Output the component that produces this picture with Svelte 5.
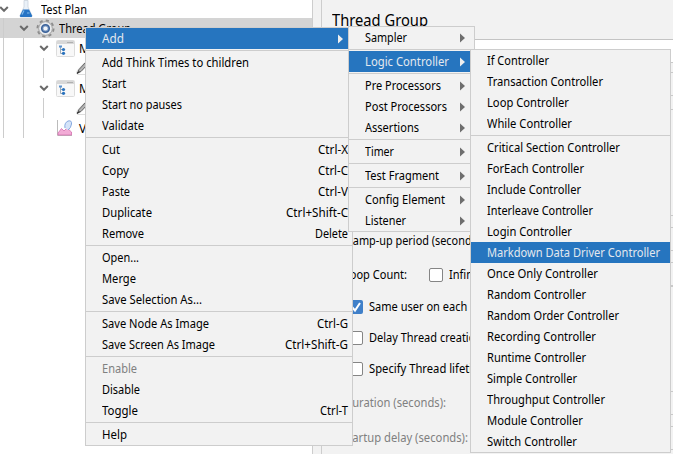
<script>
  const main = [
    [['Add', 22, '', 0, 'sub on']],
    [['Add Think Times to children', 147], ['Start', 24], ['Start no pauses', 80], ['Validate', 42]],
    [['Cut', 18, 'Ctrl-X', 30], ['Copy', 27, 'Ctrl-C', 30], ['Paste', 28, 'Ctrl-V', 30], ['Duplicate', 50, 'Ctrl+Shift-C', 62], ['Remove', 42, 'Delete', 33]],
    [['Open...', 37], ['Merge', 34], ['Save Selection As...', 100]],
    [['Save Node As Image', 107, 'Ctrl-G', 31], ['Save Screen As Image', 113, 'Ctrl+Shift-G', 63]],
    [['Enable', 35, '', 0, 'off'], ['Disable', 38], ['Toggle', 36, 'Ctrl-T', 28]],
    [['Help', 25]]
  ];
  const kinds = [
    [['Sampler', 42, '', 0, 'sub']],
    [['Logic Controller', 84, '', 0, 'sub on']],
    [['Pre Processors', 76, '', 0, 'sub'], ['Post Processors', 82, '', 0, 'sub'], ['Assertions', 54, '', 0, 'sub']],
    [['Timer', 29, '', 0, 'sub']],
    [['Test Fragment', 74, '', 0, 'sub']],
    [['Config Element', 80, '', 0, 'sub'], ['Listener', 41, '', 0, 'sub']]
  ];
  const controllers = [
    [['If Controller', 62], ['Transaction Controller', 116], ['Loop Controller', 82], ['While Controller', 85]],
    [
      ['Critical Section Controller', 133], ['ForEach Controller', 97], ['Include Controller', 94],
      ['Interleave Controller', 106], ['Login Controller', 85], ['Markdown Data Driver Controller', 173, '', 0, 'on'],
      ['Once Only Controller', 111], ['Random Controller', 99], ['Random Order Controller', 132],
      ['Recording Controller', 109], ['Runtime Controller', 99], ['Simple Controller', 90],
      ['Throughput Controller', 118], ['Module Controller', 96], ['Switch Controller', 90]
    ]
  ];

  // Condenses a label to the given width.
  function fit(node, width) {
    const natural = node.getBoundingClientRect().width;
    node.style.width = width + 'px';
    node.style.transform = `scaleX(${width / natural})`;
  }
</script>

{#snippet label(text, width)}<span class="label" use:fit={width}>{text}</span>{/snippet}

{#snippet menu(groups, name)}
  <div class="menu {name}">
    {#each groups as group}
      <div class="group">
        {#each group as [text, width, keys, keysWidth, state]}
          <div class="item {state ?? ''}">
            {@render label(text, width)}
            {#if keys}{@render label(keys, keysWidth)}{/if}
            {#if state?.includes('sub')}
              <svg class="arrow" width="5" height="10" viewBox="0 0 5 10"><path d="M0 0.5L5 5L0 9.5Z" /></svg>
            {/if}
          </div>
        {/each}
      </div>
    {/each}
  </div>
{/snippet}

{#snippet chevron()}
  <svg class="chev" width="10" height="8" viewBox="0 0 10 8"><path d="M1.2 2L5 5.8L8.8 2" fill="none" stroke="#6a6a6a" stroke-width="2" /></svg>
{/snippet}

{#snippet folder()}
  <svg class="folder" width="19" height="17" viewBox="0 0 19 17">
    <rect x=".5" y=".5" width="18" height="16" rx="1" fill="#f8f8f8" stroke="#dcdcdc" />
    <path d="M1 1h17v3H1z" fill="#d8d8d8" /><path d="M11 2.5h6" stroke="#b0b0b0" />
    <path d="M4.500 6v7.500H7M4.500 9.500H7" stroke="#9cabb8" fill="none" />
    <path d="M3 5.500h3v2H3z" fill="#5b93cf" /><circle cx="7.500" cy="9.500" r="1.600" fill="#2871bd" /><circle cx="7.500" cy="13.300" r="1.600" fill="#2871bd" />
  </svg>
{/snippet}

{#snippet pencil()}
  <svg width="14" height="16" viewBox="0 0 14 16">
    <path d="M1 14V11L8 3h6v11.500H2z" fill="#fff" stroke="#ddd" />
    <path d="M1.500 13L3 9.500L10 2L12 4L5 11.500Z" fill="#b5b5b5" stroke="#606060" />
    <path d="M1 13.500L3.500 11.500" stroke="#333" stroke-width="1.300" />
  </svg>
{/snippet}

<div class="window">
  <div class="tree">
    <div class="node plan">
      {@render chevron()}
      <svg class="flask" width="14" height="18" viewBox="0 0 14 18">
        <path d="M5 .5h4v6.500l4 8.500q.5 1.500-1 1.500H2q-1.500 0-1-1.500L5 7z" fill="#eaf1f8" stroke="#c9d2dc" stroke-width=".8" />
        <path d="M4 9.500h6l3 6q.5 1.500-1 1.500H2q-1.500 0-1-1.500z" fill="#2674c5" />
        <path d="M5 10.500L3 14.500M8 13h2.500" stroke="#83bbe9" stroke-width="1.200" />
      </svg>
      {@render label('Test Plan', 46)}
    </div>
    <div class="node thread">
      {@render chevron()}
      <svg class="gear" width="19" height="19" viewBox="0 0 20 20">
        <circle cx="10" cy="10" r="8.500" fill="none" stroke="#8d8d8d" stroke-width="2" stroke-dasharray="3.340 3.336" />
        <circle cx="10" cy="10" r="7.200" fill="#e8eaec" stroke="#999" stroke-width=".9" />
        <circle cx="10" cy="10" r="4" fill="#7e9cc4" stroke="#3b629a" stroke-width="1.600" />
        <circle cx="10" cy="10" r="2.200" fill="#f2f5f9" />
      </svg>
      {@render label('Thread Group', 72)}
    </div>
    <div class="node module">{@render chevron()}{@render folder()}<span class="name">Module</span></div>
    <div class="node leaf">{@render pencil()}</div>
    <div class="node module">{@render chevron()}{@render folder()}<span class="name">Module</span></div>
    <div class="node leaf">{@render pencil()}</div>
    <div class="node view">
      <svg width="17" height="18" viewBox="0 0 17 18">
        <path d="M1.500 1v15.500H16" fill="none" stroke="#bbb" />
        <path d="M2 14L5.500 9.500L8 12L11 9L15.500 13V16H2z" fill="#f2abd6" stroke="#d46fae" stroke-width=".8" />
        <path d="M9 9Q8 4 12 2Q16 1 15.500 5Q15 9 12 11" fill="#d5e4f9" stroke="#86a9e0" />
      </svg>
      <span class="name">View</span>
    </div>
    <i class="guide root"></i><i class="guide child"></i><i class="guide first"></i><i class="guide second"></i>
  </div>
  <div class="divider"></div>
  <div class="panel">
    <div class="title"><span class="label" use:fit={96}>Thread Group</span></div>
    <div class="name-area"></div>
    <div class="form">
      <div class="row ramp">{@render label('Ramp-up period (seconds):', 137)}</div>
      <div class="row loop">{@render label('Loop Count:', 63)}<b class="box"></b>{@render label('Infinite', 37)}</div>
      <div class="row check">
        <b class="box checked"><svg width="14" height="14" viewBox="0 0 14 14"><path d="M3 7L6 10.500L11 3" fill="none" stroke="#fff" stroke-width="2" /></svg></b>
        {@render label('Same user on each iteration', 145)}
      </div>
      <div class="row check">
        <b class="box"></b>{@render label('Delay Thread creation until needed', 181)}
      </div>
      <div class="row check"><b class="box"></b>{@render label('Specify Thread lifetime', 120)}</div>
      <div class="row dim duration">{@render label('Duration (seconds):', 102)}</div>
      <div class="row dim startup">{@render label('Startup delay (seconds):', 126)}</div>
    </div>
    <div class="edge">
      <i style="height:11px"></i><i style="height:15px;margin-top:22px"></i>
      <i style="height:13px;margin-top:105px"></i><i style="height:13px;margin-top:22px"></i>
      <i style="height:1px;margin-top:22px"></i><i style="height:24px;margin-top:104px"></i>
      <i style="height:24px;margin-top:11px"></i>
    </div>
  </div>
  {@render menu(main, 'main')}
  {@render menu(kinds, 'kinds')}
  {@render menu(controllers, 'controllers')}
</div>

<style>
  :global(body) { margin: 0; }
  .window {
    position: relative; width: 673px; height: 454px; overflow: hidden; display: flex;
    background: #f2f2f2; color: #000; font: 12px/21px 'Noto Sans', 'Open Sans', sans-serif;
  }
  .window * { box-sizing: border-box; }
  svg { display: block; flex: none; }
  .label { display: inline-block; white-space: pre; flex: none; transform-origin: 0 50%; }
  .tree { position: relative; width: 312px; background: #fff; overflow: hidden; }
  .node { height: 20px; display: flex; align-items: center; }
  .plan { height: 18px; }
  .chev { margin-left: -1px; }
  .plan .label { margin-left: 8px; }
  .flask { margin-left: 10px; }
  .thread { padding-left: 20px; background: #d4d4d4; }
  .gear { margin: 0 4px 0 7px; }
  .module { padding-left: 40px; }
  .folder { margin-left: 7px; }
  .leaf { padding-left: 76px; }
  .view { padding-left: 56px; }
  .name { margin-left: 4px; }
  .view .name { margin-left: 6px; }
  .guide { position: absolute; width: 1px; background: #ccc; }
  .root { left: 3px; top: 18px; height: 120px; }
  .child { left: 23px; top: 38px; height: 100px; }
  .first { left: 43px; top: 58px; height: 20px; }
  .second { left: 43px; top: 98px; height: 20px; }
  .divider { width: 9px; border-left: 1px solid #cdcdcd; }
  .panel { position: relative; flex: 1; border-left: 1px solid #cdcdcd; }
  .title { height: 39px; padding: 8px 0 0 10px; font-size: 16px; line-height: 24px; }
  .name-area { height: 23px; background: #fff; border-top: 1px solid #c4c4c4; }
  .form { padding-top: 168px; }
  .row { display: flex; align-items: center; height: 21px; }
  .ramp, .loop, .duration { padding-left: 22px; }
  .ramp { padding-left: 24px; }
  .loop { margin-top: 13px; }
  .loop .box { margin: 0 6px 0 22px; }
  .check { padding-left: 27px; margin-top: 10px; gap: 6px; }
  .loop + .check { margin-top: 11px; }
  .box { width: 14px; height: 14px; border: 1px solid #858585; border-radius: 2px; background: #fff; }
  .checked { background: #4080c9; border: 0; }
  .dim { color: #808080; }
  .duration { margin-top: 13px; }
  .startup { padding-left: 20px; margin-top: 14px; }
  .edge { position: absolute; top: 62px; right: 0; width: 2px; }
  .edge i { display: block; border: solid #c9c9c9; border-width: 1px 0; }
  .menu { position: absolute; background: #f2f2f2; border: 1px solid #cdcdcd; }
  .main { left: 85px; top: 27px; width: 268px; }
  .kinds { left: 348px; top: 26px; width: 127px; }
  .controllers { left: 470px; top: 49px; width: 201px; }
  .group + .group { margin-top: 1px; border-top: 1px solid #cdcdcd; padding-top: 1px; }
  .item { display: flex; justify-content: space-between; align-items: center; height: 21px; padding: 0 4px 0 16px; }
  .sub { padding-right: 9px; }
  .on { background: #2675bf; color: #e3e8ee; }
  .off { color: #808080; }
  .arrow { fill: #6e6e6e; }
  .on .arrow { fill: #eee; }
</style>
